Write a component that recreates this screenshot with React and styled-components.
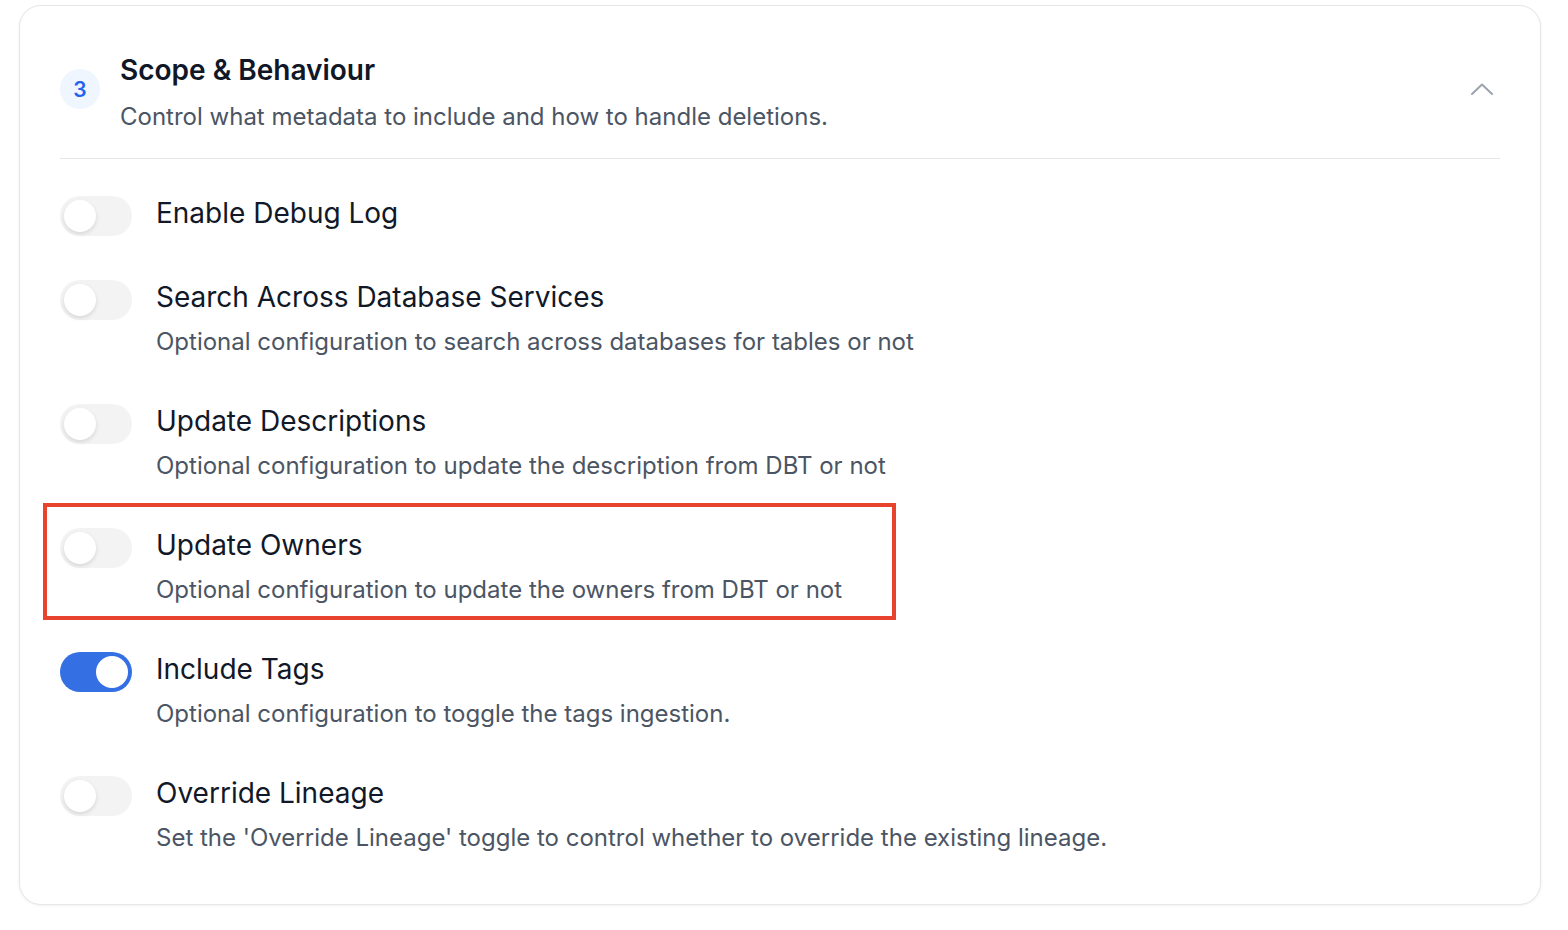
import styled, { createGlobalStyle } from 'styled-components';

const GlobalStyle = createGlobalStyle`
  body {
    margin: 0;
    background: #ffffff;
    font-family: Inter, "Noto Sans", sans-serif;
    -webkit-font-smoothing: antialiased;
  }
`;

const options = [
  { title: 'Enable Debug Log', on: false },
  {
    title: 'Search Across Database Services',
    desc: 'Optional configuration to search across databases for tables or not',
    on: false,
  },
  {
    title: 'Update Descriptions',
    desc: 'Optional configuration to update the description from DBT or not',
    on: false,
  },
  {
    title: 'Update Owners',
    desc: 'Optional configuration to update the owners from DBT or not',
    on: false,
    highlight: true,
  },
  {
    title: 'Include Tags',
    desc: 'Optional configuration to toggle the tags ingestion.',
    on: true,
  },
  {
    title: 'Override Lineage',
    desc: "Set the 'Override Lineage' toggle to control whether to override the existing lineage.",
    on: false,
  },
];

export default function App() {
  return (
    <>
      <GlobalStyle />
      <Page>
        <Card>
          <Header>
            <StepBadge>3</StepBadge>
            <HeaderText>
              <Title>Scope &amp; Behaviour</Title>
              <Subtitle>Control what metadata to include and how to handle deletions.</Subtitle>
            </HeaderText>
            <Collapse aria-label="Collapse section">
              <svg width="22" height="12" viewBox="0 0 22 12" fill="none">
                <polyline
                  points="1,11 11,1.5 21,11"
                  stroke="#9ca3af"
                  strokeWidth="2"
                  strokeLinecap="round"
                  strokeLinejoin="round"
                />
              </svg>
            </Collapse>
          </Header>

          <Body>
            {options.map((opt) => (
              <Row key={opt.title}>
                {opt.highlight && <Highlight />}
                <Switch $on={opt.on} role="switch" aria-checked={opt.on}>
                  <Knob $on={opt.on} />
                </Switch>
                <RowText>
                  <Label>{opt.title}</Label>
                  {opt.desc && <Description>{opt.desc}</Description>}
                </RowText>
              </Row>
            ))}
          </Body>
        </Card>
      </Page>
    </>
  );
}

const Page = styled.div`
  padding: 5px 27px 24px 19px;
`;

const Card = styled.section`
  background: #fff;
  border: 1.5px solid #e6e6e6;
  border-radius: 22px;
  box-shadow: 0 1px 3px rgba(16, 24, 40, 0.06);
  padding: 0 40px 44px;
  min-height: 900px;
  box-sizing: border-box;
`;

const Header = styled.div`
  display: flex;
  align-items: center;
  gap: 20px;
  padding: 47px 0 25px;
  border-bottom: 1.5px solid #e5e7eb;
`;

const StepBadge = styled.div`
  flex: none;
  width: 40px;
  height: 40px;
  border-radius: 50%;
  background: #eff6ff;
  color: #2563eb;
  font-size: 21px;
  font-weight: 600;
  display: flex;
  align-items: center;
  justify-content: center;
  margin-top: -8px;
`;

const HeaderText = styled.div`
  flex: 1;
  display: flex;
  flex-direction: column;
  gap: 14px;
`;

const Title = styled.h2`
  margin: 0;
  font-size: 28px;
  line-height: 34px;
  font-weight: 600;
  color: #101828;
`;

const Subtitle = styled.p`
  margin: 0;
  font-size: 24px;
  line-height: 32px;
  color: #4b5563;
`;

const Collapse = styled.button`
  border: 0;
  background: none;
  padding: 0;
  margin-right: 7px;
  margin-top: -8px;
  display: flex;
  cursor: pointer;
`;

const Body = styled.div`
  display: flex;
  flex-direction: column;
  gap: 44px;
  padding-top: 37px;
`;

const Row = styled.div`
  position: relative;
  display: flex;
  align-items: flex-start;
  gap: 24px;
`;

const Highlight = styled.div`
  position: absolute;
  left: -17px;
  top: -25px;
  width: 853px;
  height: 117px;
  border: 4px solid #e8432e;
  box-sizing: border-box;
  pointer-events: none;
`;

const Switch = styled.div`
  flex: none;
  position: relative;
  width: 72px;
  height: 40px;
  border-radius: 20px;
  background: ${(p) => (p.$on ? '#3470e4' : '#f3f3f3')};
`;

const Knob = styled.span`
  position: absolute;
  top: 4px;
  left: ${(p) => (p.$on ? '36px' : '4px')};
  width: 32px;
  height: 32px;
  border-radius: 50%;
  background: #fff;
  box-shadow: ${(p) => (p.$on ? 'none' : '0 2px 4px rgba(0, 0, 0, 0.12)')};
`;

const RowText = styled.div`
  display: flex;
  flex-direction: column;
  gap: 11px;
  padding-bottom: 1px;
`;

const Label = styled.div`
  font-size: 28px;
  line-height: 34px;
  color: #111827;
`;

const Description = styled.div`
  font-size: 24px;
  line-height: 34px;
  color: #4b5563;
`;
